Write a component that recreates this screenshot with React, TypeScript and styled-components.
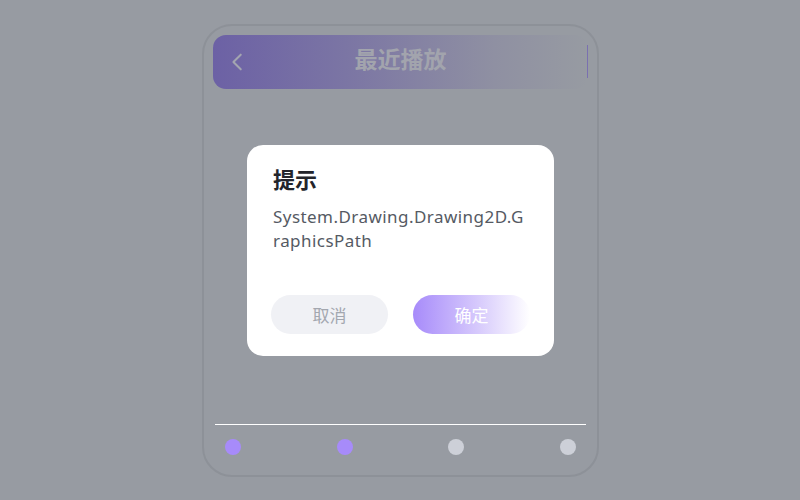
import React from 'react';
import styled, { createGlobalStyle } from 'styled-components';

const GlobalStyle = createGlobalStyle`
  html, body {
    margin: 0;
    padding: 0;
    background: #979ba2;
    font-family: "Noto Sans", "Noto Sans CJK SC", sans-serif;
  }
`;

const Page = styled.div`
  width: 800px;
  height: 500px;
  box-sizing: border-box;
  padding: 24px 201px 23px 202px;
  background: #979ba2;
  position: relative;
`;

const Phone = styled.div`
  height: 100%;
  box-sizing: border-box;
  border: 2px solid #8d9198;
  border-radius: 30px;
  padding: 9px 9px 20px 9px;
  display: flex;
  flex-direction: column;
`;

const Header = styled.div`
  height: 54px;
  border-radius: 13px;
  background: linear-gradient(90deg, #6c61a5 0%, #7b75a4 35%, #8f90a2 75%, #979ba2 100%);
  display: flex;
  align-items: center;
  position: relative;
  padding: 0 14px;
`;

const Back = styled.svg`
  width: 22px;
  height: 22px;
  flex-shrink: 0;
  margin-top: -1px;
`;

const Title = styled.div`
  position: absolute;
  left: 0;
  right: 0;
  top: 0;
  bottom: 0;
  display: flex;
  align-items: center;
  justify-content: center;
  padding-bottom: 5px;
  font-size: 23px;
  line-height: 1;
  font-weight: 700;
  color: #a2a4ad;
  pointer-events: none;
`;

const EdgeMark = styled.div`
  position: absolute;
  right: 0;
  top: 10px;
  width: 1px;
  height: 33px;
  background: #7a70b0;
`;

const Content = styled.div`
  flex: 1;
`;

const Footer = styled.div`
  border-top: 1px solid #ffffff;
  margin: 0 2px;
  padding: 14px 10px 0 10px;
  display: flex;
  justify-content: space-between;
  align-items: center;
`;

const Dot = styled.div<{ $active: boolean }>`
  flex: 0 0 16px;
  width: 16px;
  height: 16px;
  border-radius: 50%;
  background-color: ${(p) => (p.$active ? '#a78bfa' : '#cdd0d8')};
`;

const Dialog = styled.div`
  position: absolute;
  left: 247px;
  top: 145px;
  width: 307px;
  height: 211px;
  box-sizing: border-box;
  background: #ffffff;
  border-radius: 16px;
  padding: 18px 24px 22px 24px;
  display: flex;
  flex-direction: column;
`;

const DialogTitle = styled.div`
  font-size: 22px;
  font-weight: 700;
  color: #23252b;
  line-height: 32px;
  padding-left: 2px;
`;

const DialogText = styled.div`
  margin-top: 10px;
  padding-left: 2px;
  font-size: 17px;
  letter-spacing: 0.45px;
  line-height: 24px;
  color: #555a63;
  word-break: break-all;
  flex: 1;
`;

const Actions = styled.div`
  display: flex;
  gap: 25px;
`;

const Button = styled.button<{ $primary?: boolean }>`
  flex: 1;
  height: 39px;
  border: none;
  border-radius: 20px;
  font-family: inherit;
  font-size: 17px;
  background: ${(p) => (p.$primary ? 'linear-gradient(90deg, #a78bfa 0%, #d6c9fc 55%, #ffffff 100%)' : '#f0f1f5')};
  color: ${(p) => (p.$primary ? '#ffffff' : '#a3a7af')};
`;

const dots = [true, true, false, false];

export default function App() {
  return (
    <>
      <GlobalStyle />
      <Page>
        <Phone>
          <Header>
            <Back viewBox="0 0 24 24" fill="none" stroke="#a3a5b0" strokeWidth="2.2" strokeLinecap="round" strokeLinejoin="round">
              <path d="M15 4l-8 8 8 8" />
            </Back>
            <Title>最近播放</Title>
            <EdgeMark />
          </Header>
          <Content />
          <Footer>
            {dots.map((on, i) => (
              <Dot key={i} $active={on} />
            ))}
          </Footer>
        </Phone>
        <Dialog>
          <DialogTitle>提示</DialogTitle>
          <DialogText>System.Drawing.Drawing2D.GraphicsPath</DialogText>
          <Actions>
            <Button>取消</Button>
            <Button $primary>确定</Button>
          </Actions>
        </Dialog>
      </Page>
    </>
  );
}
